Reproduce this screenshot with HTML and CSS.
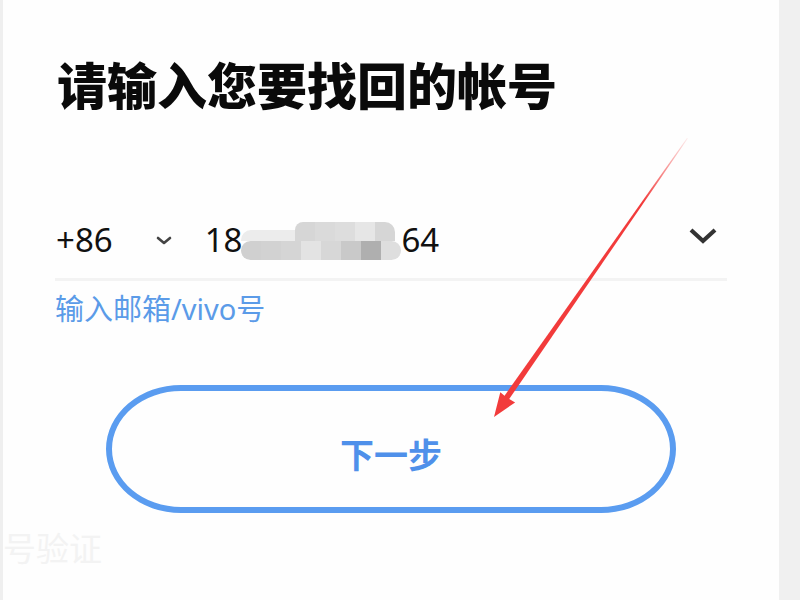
FILE: index.html
```html
<!DOCTYPE html>
<html lang="zh-CN">
<head>
<meta charset="utf-8">
<title>找回帐号</title>
<link rel="stylesheet" href="styles.css">
</head>
<body>
<div class="page">
  <div class="edge-left"></div>
  <main class="main">
    <h1 class="title">请输入您要找回的帐号</h1>
    <div class="phone-row">
      <div class="cc">
        <span class="cc-code">+86</span>
        <svg class="cc-chev" width="16" height="9" viewBox="0 0 16 9"><path d="M2 2 L8 7 L14 2" fill="none" stroke="#444" stroke-width="2.6" stroke-linecap="round" stroke-linejoin="round"/></svg>
      </div>
      <div class="number">
        <span class="digits">18</span>
        <div class="mosaic">
          <div class="m-row m-top">
            <div class="cell lt"></div>
            <div class="cell t1"></div><div class="cell t2"></div><div class="cell t3"></div><div class="cell t4"></div><div class="cell t5"></div>
          </div>
          <div class="m-row m-bot">
            <div class="cell b1"></div><div class="cell b2"></div><div class="cell b3"></div><div class="cell b4"></div><div class="cell b5"></div><div class="cell b6"></div><div class="cell b7"></div><div class="cell b8"></div>
          </div>
        </div>
        <span class="digits tail">64</span>
      </div>
      <svg class="drop" width="30" height="18" viewBox="0 0 30 18"><path d="M3 3 L15 14 L27 3" fill="none" stroke="#333" stroke-width="4.2" stroke-linejoin="miter"/></svg>
    </div>
    <div class="divider"></div>
    <a class="alt-link">输入邮箱/vivo号</a>
    <button class="next-btn">下一步</button>
    <div class="ghost">号验证</div>
  </main>
  <div class="edge-right"></div>
</div>
<svg class="annot" width="800" height="600" viewBox="0 0 800 600">
  <defs>
    <linearGradient id="fade" x1="687" y1="138" x2="560" y2="320" gradientUnits="userSpaceOnUse">
      <stop offset="0" stop-color="#f23b3b" stop-opacity="0.1"/>
      <stop offset="0.35" stop-color="#f23b3b" stop-opacity="1"/>
      <stop offset="1" stop-color="#f23b3b" stop-opacity="1"/>
    </linearGradient>
  </defs>
  <polygon points="687,138 687.8,138.6 507.4,401.6 502.6,398.4" fill="url(#fade)"/>
  <polygon points="494,417 500.3,392.2 506,397 515.1,402.4" fill="#f23b3b"/>
</svg>
</body>
</html>
```

FILE: styles.css
```css
* { box-sizing: border-box; }
html, body { margin: 0; padding: 0; }
body {
  width: 800px;
  height: 600px;
  overflow: hidden;
  background: #fefefe;
  font-family: "Noto Sans", "Noto Sans CJK SC", sans-serif;
  position: relative;
}
.page {
  display: flex;
  width: 800px;
  height: 600px;
}
.edge-left { width: 3px; background: #efefef; flex: none; }
.edge-right { width: 21px; background: #f0f0f0; flex: none; }
.main {
  flex: 1;
  background: #fefefe;
  padding: 50px 52px 0 52px;
  display: flex;
  flex-direction: column;
  overflow: hidden;
}
.title {
  margin: 0 0 0 2px;
  font-family: "Noto Sans CJK SC", sans-serif;
  font-weight: 900;
  font-size: 50px;
  line-height: 66px;
  color: #0a0a0a;
  letter-spacing: 0;
}
.phone-row {
  margin-top: 100px;
  height: 46px;
  display: flex;
  align-items: center;
}
.cc { display: flex; align-items: center; }
.cc-code {
  font-size: 33px;
  color: #111;
  margin-left: 1px;
}
.cc-chev { margin-left: 43px; margin-top: 3px; }
.number {
  display: flex;
  align-items: center;
  margin-left: 33px;
}
.digits { font-size: 33px; color: #111; }
.tail { margin-left: 2px; }
.mosaic {
  position: relative;
  z-index: 1;
  width: 162px;
  height: 38px;
  display: flex;
  flex-direction: column;
  margin-left: -1px;
  margin-top: 4px;
  margin-right: -4px;
}
.m-row { display: flex; height: 19px; }
.m-top { align-items: flex-end; }
.cell { width: 20px; height: 19px; }
.lt { width: 54px; height: 11px; background: #ececec; border-radius: 10px 0 0 0; }
.t1 { background: #d6d6d6; border-top-left-radius: 8px; }
.t2 { background: #dadada; }
.t3 { background: #dddddd; }
.t4 { background: #e6e6e6; }
.t5 { background: #d6d6d6; border-top-right-radius: 10px; }
.b1 { background: #d0d0d0; border-radius: 10px 0 0 10px; }
.b2 { background: #d2d2d2; }
.b3 { background: #d5d5d5; }
.b4 { background: #e3e3e3; }
.b5 { background: #d7d7d7; }
.b6 { background: #c9c9c9; }
.b7 { background: #afafaf; }
.b8 { background: #dedede; border-radius: 0 10px 10px 0; }
.drop { margin-left: auto; margin-right: 9px; margin-top: -6px; }
.divider {
  margin-top: 16px;
  height: 3px;
  background: #f3f3f3;
}
.alt-link {
  margin-top: 8px;
  font-family: "Noto Sans", "Noto Sans CJK SC", sans-serif;
  font-size: 29px;
  line-height: 40px;
  color: #5b9be8;
  align-self: flex-start;
}
.next-btn {
  margin-top: 56px;
  margin-left: 51px;
  width: 570px;
  height: 128px;
  border: 6px solid #5a9cf0;
  border-radius: 75px / 64px;
  background: #fefefe;
  color: #4f90ea;
  font-family: "Noto Sans CJK SC", sans-serif;
  font-weight: 700;
  font-size: 34px;
  padding: 8px 0 0 0;
}
.ghost {
  margin-top: 10px;
  margin-left: -52px;
  font-family: "Noto Sans CJK SC", sans-serif;
  font-size: 33px;
  color: #f3f3f3;
}
.annot {
  position: absolute;
  left: 0;
  top: 0;
  pointer-events: none;
}
```
